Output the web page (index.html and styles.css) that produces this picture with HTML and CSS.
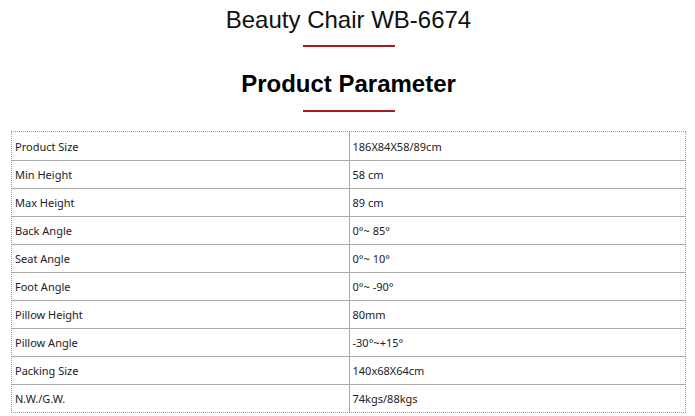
FILE: index.html
```html
<!DOCTYPE html>
<html>
<head>
<meta charset="utf-8">
<link rel="stylesheet" href="styles.css">
</head>
<body>
<div class="wrap">
  <h1 class="title">Beauty Chair WB-6674</h1>
  <div class="rule"></div>
  <h2 class="subtitle">Product Parameter</h2>
  <div class="rule"></div>
  <table class="params">
    <tr><td>Product Size</td><td>186X84X58/89cm</td></tr>
    <tr><td>Min Height</td><td>58 cm</td></tr>
    <tr><td>Max Height</td><td>89 cm</td></tr>
    <tr><td>Back Angle</td><td>0°~ 85°</td></tr>
    <tr><td>Seat Angle</td><td>0°~ 10°</td></tr>
    <tr><td>Foot Angle</td><td>0°~ -90°</td></tr>
    <tr><td>Pillow Height</td><td>80mm</td></tr>
    <tr><td>Pillow Angle</td><td>-30°~+15°</td></tr>
    <tr><td>Packing Size</td><td>140x68X64cm</td></tr>
    <tr><td>N.W./G.W.</td><td>74kgs/88kgs</td></tr>
  </table>
</div>
</body>
</html>
```
FILE: styles.css
```css
html, body {
  margin: 0;
  padding: 0;
  background: #fff;
}
.wrap {
  width: 675px;
  margin-left: 11px;
  padding-top: 7px;
}
.title {
  margin: 0;
  font-family: "Liberation Sans", Arial, sans-serif;
  font-weight: normal;
  font-size: 24px;
  line-height: 26px;
  text-align: center;
  color: #111;
}
.rule {
  width: 92px;
  height: 2px;
  background: #a31d1d;
  margin: 12px auto 0;
}
.subtitle {
  margin: 24px 0 0;
  font-family: "Liberation Sans", Arial, sans-serif;
  font-weight: bold;
  font-size: 24px;
  line-height: 26px;
  text-align: center;
  color: #000;
}
.subtitle + .rule {
  margin-top: 13px;
}
.params {
  margin-top: 19px;
  width: 675px;
  border: 1px dotted #999;
  border-collapse: separate;
  border-spacing: 0;
  table-layout: fixed;
  font-family: "Noto Sans", sans-serif;
  font-size: 11px;
  color: #222;
}
.params td {
  height: 27px;
  padding: 0 0 0 3px;
  vertical-align: middle;
  border-top: 1px solid #aaa;
}
.params tr:first-child td {
  border-top: none;
  height: 28px;
}
.params td + td {
  border-left: 1px solid #aaa;
}
```
